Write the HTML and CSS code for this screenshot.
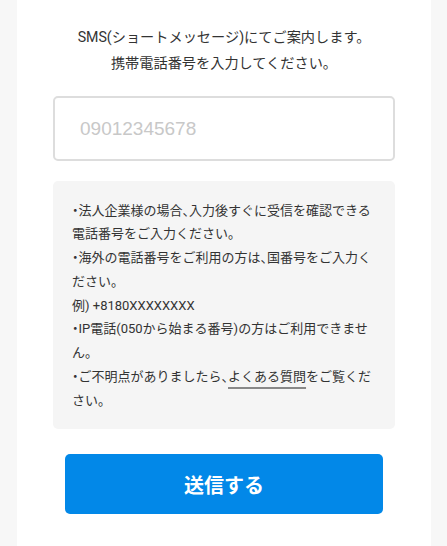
FILE: index.html
```html
<!DOCTYPE html>
<html lang="ja">
<head>
<meta charset="utf-8">
<title>SMS認証</title>
<link rel="stylesheet" href="styles.css">
</head>
<body>
<main class="panel">
  <p class="lead">SMS(ショートメッセージ)にてご案内します。<br>携帯電話番号を入力してください。</p>
  <input class="field" type="tel" placeholder="09012345678">
  <div class="note">
    <p>・法人企業様の場合、入力後すぐに受信を確認できる電話番号をご入力ください。</p>
    <p>・海外の電話番号をご利用の方は、国番号をご入力ください。</p>
    <p>例) +8180XXXXXXXX</p>
    <p>・IP電話(050から始まる番号)の方はご利用できません。</p>
    <p>・ご不明点がありましたら、<a class="faq" href="#">よくある質問</a>をご覧ください。</p>
  </div>
  <button class="submit" type="button">送信する</button>
</main>
</body>
</html>
```

FILE: styles.css
```css
html, body {
  margin: 0;
  padding: 0;
  background: #f7f7f7;
}

body {
  font-family: Roboto, "Noto Sans CJK JP", sans-serif;
  color: #333333;
}

.panel {
  box-sizing: border-box;
  width: 414px;
  min-height: 546px;
  margin: 0 16px 0 17px;
  padding-top: 25px;
  background: #ffffff;
  display: flex;
  flex-direction: column;
  align-items: center;
}

.lead {
  margin: 0;
  font-size: 14.2px;
  line-height: 25.6px;
  text-align: center;
}

.field {
  box-sizing: border-box;
  display: block;
  width: 342px;
  height: 65px;
  margin: 20px 0 0;
  padding: 0 25px;
  border: 2px solid #dddddd;
  border-radius: 5px;
  background: #ffffff;
  font-family: "Liberation Sans", Arial, sans-serif;
  font-size: 19px;
  color: #333333;
  outline: none;
}

.field::placeholder {
  color: #c8c8c8;
}

.note {
  box-sizing: border-box;
  width: 342px;
  margin-top: 20px;
  padding: 17.5px 19px 17px;
  background: #f5f5f5;
  border-radius: 5px;
  font-size: 13px;
  line-height: 23.75px;
  font-feature-settings: "halt";
}

.note p {
  margin: 0;
}

.faq {
  color: #333333;
  text-decoration: underline;
  text-decoration-color: #888888;
  text-decoration-thickness: 2px;
  text-underline-offset: 6px;
}

.submit {
  display: block;
  width: 318px;
  height: 60px;
  margin-top: 25px;
  border: none;
  border-radius: 5px;
  background: #0288e8;
  color: #ffffff;
  font-family: "Noto Sans CJK JP", sans-serif;
  font-size: 20px;
  font-weight: 700;
  cursor: pointer;
}
```
